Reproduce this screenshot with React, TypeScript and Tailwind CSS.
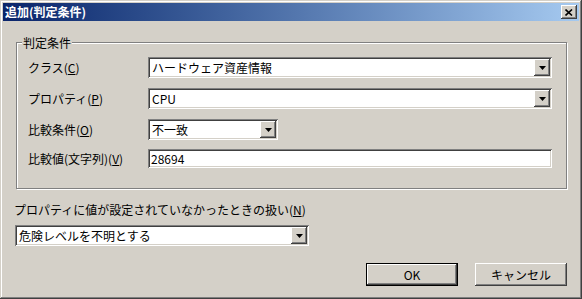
const font = { fontFamily: '"Noto Sans CJK JP", "DejaVu Sans", sans-serif' };

const raised =
  'shadow-[inset_-1px_-1px_#404040,inset_1px_1px_#ffffff,inset_-2px_-2px_#808080,inset_2px_2px_#d4d0c8]';
const sunken =
  'shadow-[inset_1px_1px_#808080,inset_-1px_-1px_#ffffff,inset_2px_2px_#404040,inset_-2px_-2px_#d4d0c8]';

function Arrow() {
  return (
    <svg width="7" height="4" viewBox="0 0 7 4">
      <polygon points="0,0 7,0 3.5,4" fill="#000" />
    </svg>
  );
}

function Combo({ value, width }: { value: string; width: string }) {
  return (
    <div className={`${width} h-[21px] bg-white ${sunken} p-[2px] flex`}>
      <div className="flex-1 flex items-center pl-[2px] text-[12px] leading-none text-black">{value}</div>
      <div className={`w-[16px] h-full bg-[#d4d0c8] ${raised} flex items-center justify-center`}>
        <Arrow />
      </div>
    </div>
  );
}

function Row({ label, children }: { label: React.ReactNode; children: React.ReactNode }) {
  return (
    <div className="flex items-center">
      <div className="w-[120px] text-[12px] leading-none text-black">{label}</div>
      {children}
    </div>
  );
}

export default function App() {
  return (
    <div
      style={font}
      className="w-[582px] h-[299px] bg-[#d4d0c8] p-[3px] flex flex-col shadow-[inset_-1px_-1px_#404040,inset_1px_1px_#d4d0c8,inset_-2px_-2px_#808080,inset_2px_2px_#ffffff]"
    >
      {/* Title bar */}
      <div className="h-[18px] flex items-center justify-between bg-gradient-to-r from-[#0a246a] to-[#a6caf0] pl-[2px] pr-[2px]">
        <span className="text-white font-bold text-[12px] leading-none">追加(判定条件)</span>
        <div className={`w-[16px] h-[14px] bg-[#d4d0c8] ${raised} flex items-center justify-center`}>
          <svg width="8" height="7" viewBox="0 0 8 7">
            <path d="M0.5 0.5 L7 6.5 M7 0.5 L0.5 6.5" stroke="#000" strokeWidth="1.6" />
          </svg>
        </div>
      </div>

      {/* Group box */}
      <div className="ml-[13px] mt-[21px] w-[551px] h-[147px] relative border border-[#808080] shadow-[inset_1px_1px_#ffffff,1px_1px_#ffffff] pl-[11px] pt-[14px] flex flex-col gap-[10px]">
        <span className="absolute -top-[7px] left-[5px] px-[1px] bg-[#d4d0c8] text-[12px] leading-[14px] text-black">
          判定条件
        </span>
        <Row label={<>クラス(<u>C</u>)</>}>
          <Combo value="ハードウェア資産情報" width="w-[404px]" />
        </Row>
        <Row label={<>プロパティ(<u>P</u>)</>}>
          <Combo value="CPU" width="w-[404px]" />
        </Row>
        <Row label={<>比較条件(<u>O</u>)</>}>
          <Combo value="不一致" width="w-[130px]" />
        </Row>
        <div className="-mt-[1px]">
          <Row label={<>比較値(文字列)(<u>V</u>)</>}>
            <div className={`w-[404px] h-[19px] bg-white ${sunken} flex items-center pl-[3px] text-[12px] leading-none text-black`}>
              28694
            </div>
          </Row>
        </div>
      </div>

      {/* Fallback handling */}
      <div className="ml-[11px] mt-[14px] text-[12px] leading-[14px] text-black">
        プロパティに値が設定されていなかったときの扱い(<u>N</u>)
      </div>
      <div className="ml-[12px] mt-[8px]">
        <Combo value="危険レベルを不明とする" width="w-[294px]" />
      </div>

      {/* Buttons */}
      <div className="mt-[17px] mr-[12px] flex justify-end gap-[17px]">
        <button className={`w-[92px] h-[23px] bg-[#d4d0c8] border border-black ${raised} text-[12px] leading-none text-black`}>
          OK
        </button>
        <button className={`w-[92px] h-[23px] bg-[#d4d0c8] ${raised} text-[12px] leading-none text-black`}>
          キャンセル
        </button>
      </div>
    </div>
  );
}
